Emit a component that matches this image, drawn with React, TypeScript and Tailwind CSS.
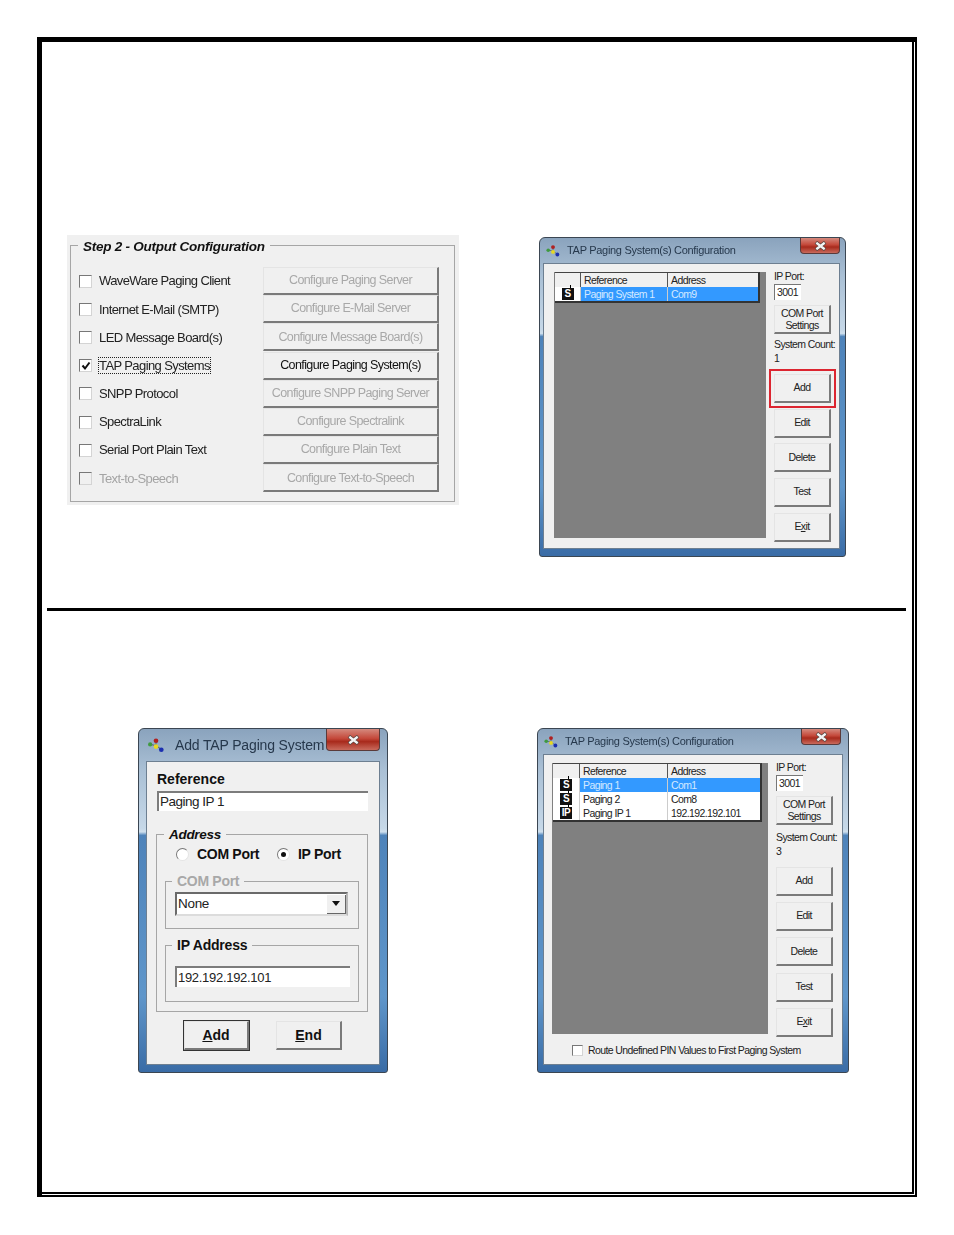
import React from 'react'

type Row = { icon: string; ref: string; addr: string; selected?: boolean }

function AppIcon({ className }: { className: string }) {
  return (
    <svg viewBox="0 0 18 16" className={className}>
      <path d="M4 7 L9 8 L9 3 M9 8 L13 11" stroke="#5a6a7a" strokeWidth="1" fill="none" />
      <circle cx="9" cy="3.5" r="2.2" fill="#b02020" />
      <circle cx="3.5" cy="7" r="2" fill="#3f9a3f" />
      <circle cx="9" cy="9" r="2.2" fill="#e8d820" />
      <circle cx="14" cy="12" r="2.2" fill="#1c2fb0" />
    </svg>
  )
}

function CloseBtn({ className }: { className: string }) {
  return (
    <div className={`flex items-center justify-center rounded-b-[4px] border border-t-0 border-[#5a3a3a] bg-[linear-gradient(180deg,#d58a7e_0%,#c4483a_45%,#a82a1c_60%,#c96a5c_100%)] ${className}`}>
      <svg viewBox="0 0 14 10" className="w-[13px] h-[10px]">
        <path d="M2 1 L12 9 M12 1 L2 9" stroke="#54443f" strokeWidth="4" />
        <path d="M2.5 1.5 L11.5 8.5 M11.5 1.5 L2.5 8.5" stroke="#f4f4f4" strokeWidth="2.4" />
      </svg>
    </div>
  )
}

function Btn({ children, className = '' }: { children: React.ReactNode; className?: string }) {
  return (
    <div className={`flex items-center justify-center text-center bg-[#f0f0f0] border-t border-l border-t-[#e4e4e4] border-l-[#e4e4e4] border-r-2 border-b-2 border-r-[#7a7a7a] border-b-[#7a7a7a] ${className}`}>
      {children}
    </div>
  )
}

function Check({ checked, disabled, className = 'w-[13px] h-[13px]' }: { checked?: boolean; disabled?: boolean; className?: string }) {
  return (
    <div className={`shrink-0 flex items-center justify-center border border-t-[#777] border-l-[#777] border-r-[#d4d4d4] border-b-[#d4d4d4] ${disabled ? 'bg-[#f0f0f0]' : 'bg-white'} ${className}`}>
      {checked && (
        <svg viewBox="0 0 10 10" className="w-[10px] h-[10px]">
          <path d="M1.5 4.5 L4 7.5 L8.5 1.5" stroke="#111" strokeWidth="2" fill="none" />
        </svg>
      )}
    </div>
  )
}

function Pager({ label }: { label: string }) {
  return (
    <div className="relative w-[12px] h-[12px] bg-[#111] text-white text-[10px] font-bold leading-[12px] text-center tracking-[-0.5px]">
      <div className="absolute right-[3px] top-[-3px] w-px h-[3px] bg-black" />
      {label}
    </div>
  )
}

function Radio({ on }: { on?: boolean }) {
  return (
    <div className="w-[13px] h-[13px] rounded-full bg-white border border-t-[#777] border-l-[#777] border-r-[#e4e4e4] border-b-[#e4e4e4] flex items-center justify-center">
      {on && <div className="w-[5px] h-[5px] rounded-full bg-[#111]" />}
    </div>
  )
}

function Group({ legend, legendClass, className, children }: { legend: string; legendClass: string; className: string; children: React.ReactNode }) {
  return (
    <div className={`relative border border-[#a6a6a6] ${className}`}>
      <div className={`absolute top-[-9px] left-[6px] px-[5px] bg-[#f0f0f0] leading-[16px] ${legendClass}`}>{legend}</div>
      {children}
    </div>
  )
}

function Frame({ className, titleBar, children }: { className: string; titleBar: React.ReactNode; children: React.ReactNode }) {
  return (
    <div className={`flex flex-col rounded-t-[6px] rounded-b-[3px] border border-[#3b4652] bg-[linear-gradient(180deg,#8aa3bd_0%,#aac0d5_12%,#c6d8e8_29%,#cfe0ee_30%,#4e83ba_31%,#5f96ca_78%,#3a6ca6_100%)] blur-[0.35px] ${className}`}>
      {titleBar}
      {children}
    </div>
  )
}

function ConfigWindow(props: {
  frame: string
  titlePad: string
  client: string
  body: string
  grid: string
  cols: string
  rows: Row[]
  count: string
  countGap: string
  btnBlock: string
  addRing?: boolean
  footer?: React.ReactNode
}) {
  const rest = [<>Edit</>, <>Delete</>, <>Test</>, <>E<u>x</u>it</>]
  return (
    <Frame
      className={props.frame}
      titleBar={
        <div className={`flex items-start justify-between h-[25px] ${props.titlePad}`}>
          <div className="flex items-center h-[25px] text-[11px] text-[#26384c] tracking-[-0.3px]">
            <AppIcon className="w-[16px] h-[14px] mr-[6px]" />
            TAP Paging System(s) Configuration
          </div>
          <CloseBtn className="w-[40px] h-[16px]" />
        </div>
      }
    >
      <div className={`bg-[#f0f0f0] border border-[#6d7f91] text-[10.5px] tracking-[-0.6px] text-[#222] ${props.client}`}>
        <div className={`flex ${props.body}`}>
          <div className={`bg-[#808080] shrink-0 pl-px ${props.grid}`}>
            <div className={`grid w-fit border-t border-t-[#444] border-r-2 border-b-2 border-r-[#333] border-b-[#333] bg-white ${props.cols}`}>
              <div className="h-[14px] bg-[#f0f0f0] border-r border-[#555]" />
              <div className="h-[14px] bg-[#f0f0f0] border-r border-[#555] pl-[3px] leading-[14px]">Reference</div>
              <div className="h-[14px] bg-[#f0f0f0] pl-[3px] leading-[14px]">Address</div>
              {props.rows.map((r) => (
                <React.Fragment key={r.ref}>
                  <div className="h-[14px] flex items-center justify-center bg-white border-r border-[#ccc]"><Pager label={r.icon} /></div>
                  <div className={`h-[14px] pl-[3px] leading-[14px] border-r border-[#ccc] ${r.selected ? 'bg-[#3399ff] text-[#d4e9ff]' : 'bg-white'}`}>{r.ref}</div>
                  <div className={`h-[14px] pl-[3px] leading-[14px] ${r.selected ? 'bg-[#3399ff] text-[#d4e9ff]' : 'bg-white'}`}>{r.addr}</div>
                </React.Fragment>
              ))}
            </div>
          </div>
          <div className="flex flex-col w-[60px] ml-[8px]">
            <div className="h-[12px] leading-[8px]">IP Port:</div>
            <div className="w-[27px] h-[16px] bg-white border-t border-l border-[#777] pl-[2px] leading-[15px]">3001</div>
            <Btn className="w-[57px] h-[29px] mt-[5px] leading-[12px]">COM Port<br />Settings</Btn>
            <div className={`h-[14px] leading-[14px] whitespace-nowrap ${props.countGap}`}>System Count:</div>
            <div className="h-[14px] leading-[14px]">{props.count}</div>
            <div className={`flex flex-col ${props.btnBlock}`}>
              <Btn className={`w-[57px] h-[29px] ${props.addRing ? 'outline-2 outline-offset-[3px] outline-[#dc2530]' : ''}`}>Add</Btn>
              {rest.map((t, i) => (
                <Btn key={i} className="w-[57px] h-[29px]">{t}</Btn>
              ))}
            </div>
          </div>
        </div>
        {props.footer}
      </div>
    </Frame>
  )
}

const outputs = [
  ['WaveWare Paging Client', 'Configure Paging Server'],
  ['Internet E-Mail (SMTP)', 'Configure E-Mail Server'],
  ['LED Message Board(s)', 'Configure Message Board(s)'],
  ['TAP Paging Systems', 'Configure Paging System(s)'],
  ['SNPP Protocol', 'Configure SNPP Paging Server'],
  ['SpectraLink', 'Configure Spectralink'],
  ['Serial Port Plain Text', 'Configure Plain Text'],
  ['Text-to-Speech', 'Configure Text-to-Speech'],
]

function OutputPanel() {
  return (
    <div className="w-[392px] h-[270px] shrink-0 bg-[#f0f0f0] pt-[10px] pl-[3px] text-[13px] tracking-[-0.6px] text-[#222] blur-[0.35px]">
      <Group legend="Step 2 - Output Configuration" legendClass="mt-[2px] ml-[1px] font-bold italic text-[13.5px] tracking-[-0.25px] text-[#111]" className="w-[385px] h-[257px] pt-[21px] pl-[8px]">
        {outputs.map(([label, action], i) => (
          <div key={label} className="flex items-center h-[28.2px]">
            <Check checked={i === 3} disabled={i === 7} />
            <div className="w-[171px] pl-[7px]">
              <span className={`${i === 3 ? 'outline-1 outline-dotted outline-[#222]' : ''} ${i === 7 ? 'text-[#a4a4a4]' : ''}`}>{label}</span>
            </div>
            <Btn className={`w-[176px] h-[28px] text-[12.5px] ${i === 3 ? 'text-[#111]' : 'text-[#a8a8a8]'}`}>{action}</Btn>
          </div>
        ))}
      </Group>
    </div>
  )
}

function AddWindow() {
  return (
    <Frame
      className="w-[250px] h-[345px] shrink-0"
      titleBar={
        <div className="flex items-start justify-between h-[32px] pl-[7px] pr-[7px]">
          <div className="flex items-center h-[32px] text-[14px] text-[#26384c] tracking-[-0.15px] whitespace-nowrap">
            <AppIcon className="w-[20px] h-[17px] mr-[9px]" />
            Add TAP Paging System
          </div>
          <CloseBtn className="w-[54px] h-[22px]" />
        </div>
      }
    >
      <div className="mx-[7px] h-[304px] bg-[#f0f0f0] border border-[#6d7f91] pl-[9px] pt-[10px] text-[14px] text-[#111]">
        <div className="ml-[1px] font-bold leading-[15px] h-[15px]">Reference</div>
        <div className="mt-[4px] ml-[1px] w-[211px] h-[20px] bg-white border-t-2 border-l-2 border-t-[#7c7c7c] border-l-[#7c7c7c] pl-[1px] text-[13.5px] leading-[18px] tracking-[-0.5px] text-[#222]">Paging IP 1</div>
        <Group legend="Address" legendClass="mt-[1px] ml-[1px] font-bold italic text-[13.5px] tracking-[-0.3px]" className="mt-[23px] w-[212px] h-[178px] pt-[12px] pl-[8px]">
          <div className="flex items-center h-[15px] font-bold tracking-[-0.3px]">
            <div className="ml-[11px]"><Radio /></div>
            <div className="ml-[8px] w-[80px]">COM Port</div>
            <Radio on />
            <div className="ml-[8px]">IP Port</div>
          </div>
          <Group legend="COM Port" legendClass="font-bold tracking-[-0.3px] text-[#a8a8a8]" className="mt-[19px] w-[194px] h-[48px] pt-[10px] pl-[9px]">
            <div className="flex items-center justify-between w-[173px] h-[24px] bg-white border-2 border-t-[#6a6a6a] border-l-[#6a6a6a] border-r-[#b8b8b8] border-b-[#dcdcdc] pl-[1px] text-[13.5px] tracking-[-0.3px] font-normal text-[#222]">
              None
              <div className="w-[19px] h-[19px] bg-[#f0f0f0] border-r border-b border-[#666] flex items-center justify-center">
                <svg viewBox="0 0 8 5" className="w-[8px] h-[5px]"><path d="M0 0 H8 L4 5 Z" fill="#111" /></svg>
              </div>
            </div>
          </Group>
          <Group legend="IP Address" legendClass="font-bold tracking-[-0.2px]" className="mt-[16px] w-[194px] h-[57px] pt-[20px] pl-[9px]">
            <div className="w-[175px] h-[21px] bg-white border-t-2 border-l-2 border-t-[#7c7c7c] border-l-[#7c7c7c] pl-[1px] text-[13px] leading-[19px] tracking-[-0.3px] text-[#222]">192.192.192.101</div>
          </Group>
        </Group>
        <div className="flex mt-[9px] ml-[28px] gap-[27px] font-bold">
          <Btn className="w-[65px] h-[29px] outline-1 outline-[#333]"><span><u>A</u>dd</span></Btn>
          <Btn className="w-[66px] h-[29px]"><span><u>E</u>nd</span></Btn>
        </div>
      </div>
    </Frame>
  )
}

export default function App() {
  return (
    <div className="w-[954px] h-[1235px] bg-white pt-[37px] pl-[37px] [font-family:'Liberation_Sans',Arial,sans-serif]">
      <div className="w-[880px] h-[1160px] border-t-[5px] border-l-[5px] border-r-2 border-b-2 border-black pr-px pb-px">
        <div className="h-full border-r-2 border-b-2 border-black">
          <div className="flex pl-[25px] pt-[193px]">
            <OutputPanel />
            <div className="ml-[80px] mt-[2px]">
              <ConfigWindow
                frame="w-[307px] h-[320px]"
                titlePad="pl-[5px] pr-[5px]"
                client="ml-[3px] mr-[5px] h-[286px]"
                body="pl-[10px] pt-[8px]"
                grid="w-[212px] h-[266px]"
                cols="grid-cols-[26px_87px_90px]"
                rows={[{ icon: 'S', ref: 'Paging System 1', addr: 'Com9', selected: true }]}
                count="1"
                countGap="mt-[3px]"
                btnBlock="mt-[9px] gap-[5.7px]"
                addRing
              />
            </div>
          </div>
          <div className="ml-[5px] mt-[51px] w-[859px] h-[3px] bg-black" />
          <div className="flex pl-[96px] pt-[117px]">
            <AddWindow />
            <div className="ml-[149px]">
              <ConfigWindow
                frame="w-[312px] h-[345px]"
                titlePad="pl-[5px] pr-[7px]"
                client="mx-[5px] h-[311px]"
                body="pl-[8px] pt-[8px]"
                grid="w-[216px] h-[271px]"
                cols="grid-cols-[27px_88px_92px]"
                rows={[
                  { icon: 'S', ref: 'Paging 1', addr: 'Com1', selected: true },
                  { icon: 'S', ref: 'Paging 2', addr: 'Com8' },
                  { icon: 'IP', ref: 'Paging IP 1', addr: '192.192.192.101' },
                ]}
                count="3"
                countGap="mt-[5px]"
                btnBlock="mt-[9px] gap-[6.2px]"
                footer={
                  <div className="flex items-center mt-[6px] ml-[28px]">
                    <Check className="w-[11px] h-[11px]" />
                    <div className="ml-[5px]">Route Undefined PIN Values to First Paging System</div>
                  </div>
                }
              />
            </div>
          </div>
        </div>
      </div>
    </div>
  )
}
